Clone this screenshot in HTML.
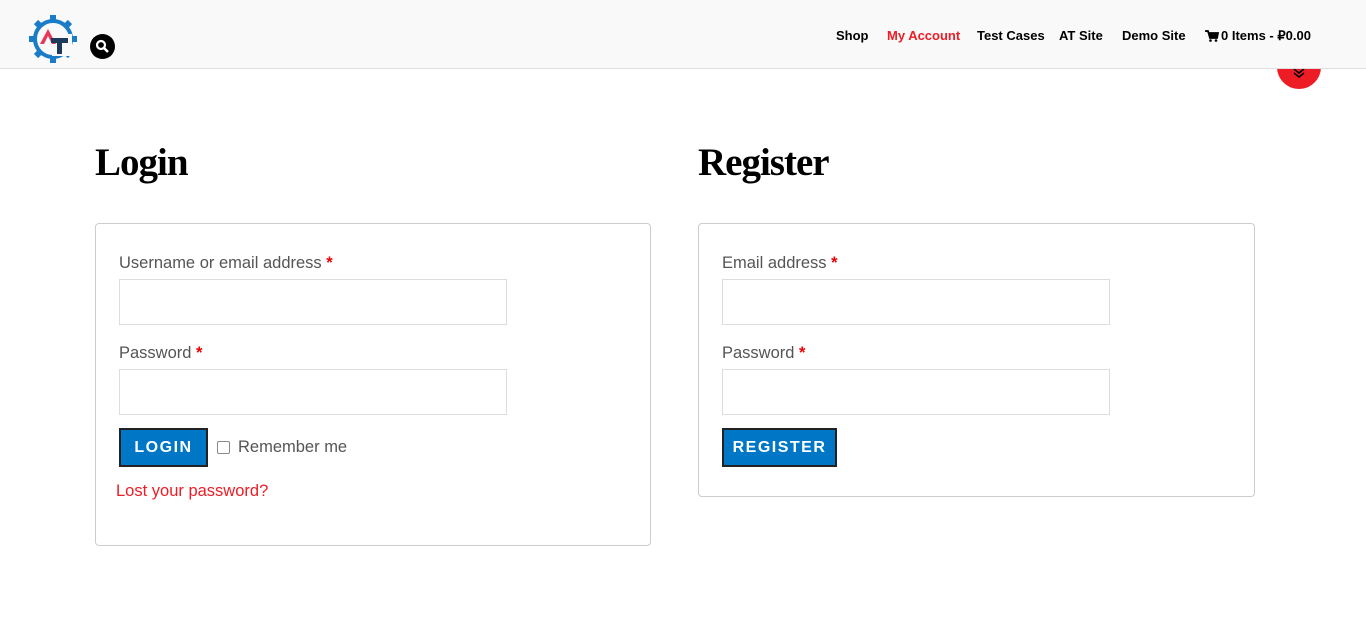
<!DOCTYPE html>
<html><head><style>
*{box-sizing:border-box;margin:0;padding:0}
body{width:1366px;height:643px;overflow:hidden;background:#fff;font-family:"Liberation Sans",sans-serif;position:relative}
.hdr{position:absolute;left:0;top:0;width:1366px;height:69px;background:#f9f9f9;border-bottom:1px solid #ddd;z-index:2}
.circ{position:absolute;left:1277px;top:45px;width:44px;height:44px;border-radius:50%;background:#ee1c25;z-index:1}
.nav{position:absolute;top:28px;font-size:13px;font-weight:bold;color:#000}
h1{position:absolute;font-family:"Liberation Serif",serif;font-size:39px;font-weight:bold;color:#000;letter-spacing:-1px}
.box{position:absolute;border:1px solid #ccc;border-radius:4px}
.lbl{position:absolute;font-size:16.5px;color:#555}
.lbl b{color:#e00;font-weight:bold}
.inp{position:absolute;width:388px;height:46px;border:1px solid #ddd;background:#fff}
.btn{position:absolute;height:39px;background:#0077c6;border:2px solid #222;color:#fff;font-weight:bold;font-size:16px;letter-spacing:1.5px;text-align:center;line-height:35px}
</style></head><body>
<div class="hdr">
<svg style="position:absolute;left:28px;top:14px" width="52" height="52" viewBox="0 0 52 52">
<circle cx="25" cy="25" r="18" fill="none" stroke="#1a7cc7" stroke-width="4"/>
<g fill="#1a7cc7">
<rect x="22" y="1" width="6" height="7"/>
<rect x="22" y="1" width="6" height="7" transform="rotate(45 25 25)"/>
<rect x="22" y="1" width="6" height="7" transform="rotate(90 25 25)"/>
<rect x="22" y="1" width="6" height="7" transform="rotate(135 25 25)"/>
<rect x="22" y="1" width="6" height="7" transform="rotate(180 25 25)"/>
<rect x="22" y="1" width="6" height="7" transform="rotate(225 25 25)"/>
<rect x="22" y="1" width="6" height="7" transform="rotate(270 25 25)"/>
<rect x="22" y="1" width="6" height="7" transform="rotate(315 25 25)"/>
</g>
<rect x="24" y="20" width="20" height="22" fill="#f9f9f9"/>
<path d="M12 30 L20 15 L28 30 L24 30 L20 22 L16 30Z" fill="#e8375a"/>
<path d="M23 24 H40 V29 H34 V40 H29 V29 H23Z" fill="#1e3a5a"/>
</svg>
<div style="position:absolute;left:90px;top:34px;width:25px;height:25px;border-radius:50%;background:#000"><svg width="25" height="25" viewBox="0 0 25 25"><circle cx="11" cy="11" r="4" stroke="#fff" stroke-width="2.2" fill="none"/><path d="M14 14 L18 18" stroke="#fff" stroke-width="2.6"/></svg></div>
<span class="nav" style="left:836px">Shop</span>
<span class="nav" style="left:887px;color:#ee1c25">My Account</span>
<span class="nav" style="left:977px">Test Cases</span>
<span class="nav" style="left:1059px">AT Site</span>
<span class="nav" style="left:1122px">Demo Site</span>
<svg style="position:absolute;left:1205px;top:30px" width="14" height="12" viewBox="0 0 14 12"><path d="M0 1 H3 L5 8 H12 L13 3 H4" stroke="#000" stroke-width="1.8" fill="#000"/><circle cx="5.5" cy="10.5" r="1.3"/><circle cx="11" cy="10.5" r="1.3"/></svg>
<span class="nav" style="left:1221px">0 Items - ₽0.00</span>
</div>
<div class="circ"><svg width="44" height="44" viewBox="0 0 44 44"><path d="M17 28 L22 32 L27 28 M17 24 L22 28 L27 24" stroke="#000" stroke-width="1.6" fill="none"/></svg></div>
<h1 style="left:95px;top:140px">Login</h1>
<h1 style="left:698px;top:140px">Register</h1>
<div class="box" style="left:95px;top:223px;width:556px;height:323px"></div>
<div class="box" style="left:698px;top:223px;width:557px;height:274px"></div>
<div class="lbl" style="left:119px;top:254px">Username or email address <b>*</b></div>
<div class="inp" style="left:119px;top:279px"></div>
<div class="lbl" style="left:119px;top:344px">Password <b>*</b></div>
<div class="inp" style="left:119px;top:369px"></div>
<div class="btn" style="left:119px;top:428px;width:89px">LOGIN</div>
<div style="position:absolute;left:217px;top:441px;width:13px;height:13px;border:1.5px solid #888;border-radius:2px"></div>
<div class="lbl" style="left:238px;top:438px">Remember me</div>
<div class="lbl" style="left:116px;top:482px;color:#ee1c25">Lost your password?</div>
<div class="lbl" style="left:722px;top:254px">Email address <b>*</b></div>
<div class="inp" style="left:722px;top:279px"></div>
<div class="lbl" style="left:722px;top:344px">Password <b>*</b></div>
<div class="inp" style="left:722px;top:369px"></div>
<div class="btn" style="left:722px;top:428px;width:115px">REGISTER</div>
</body></html>
